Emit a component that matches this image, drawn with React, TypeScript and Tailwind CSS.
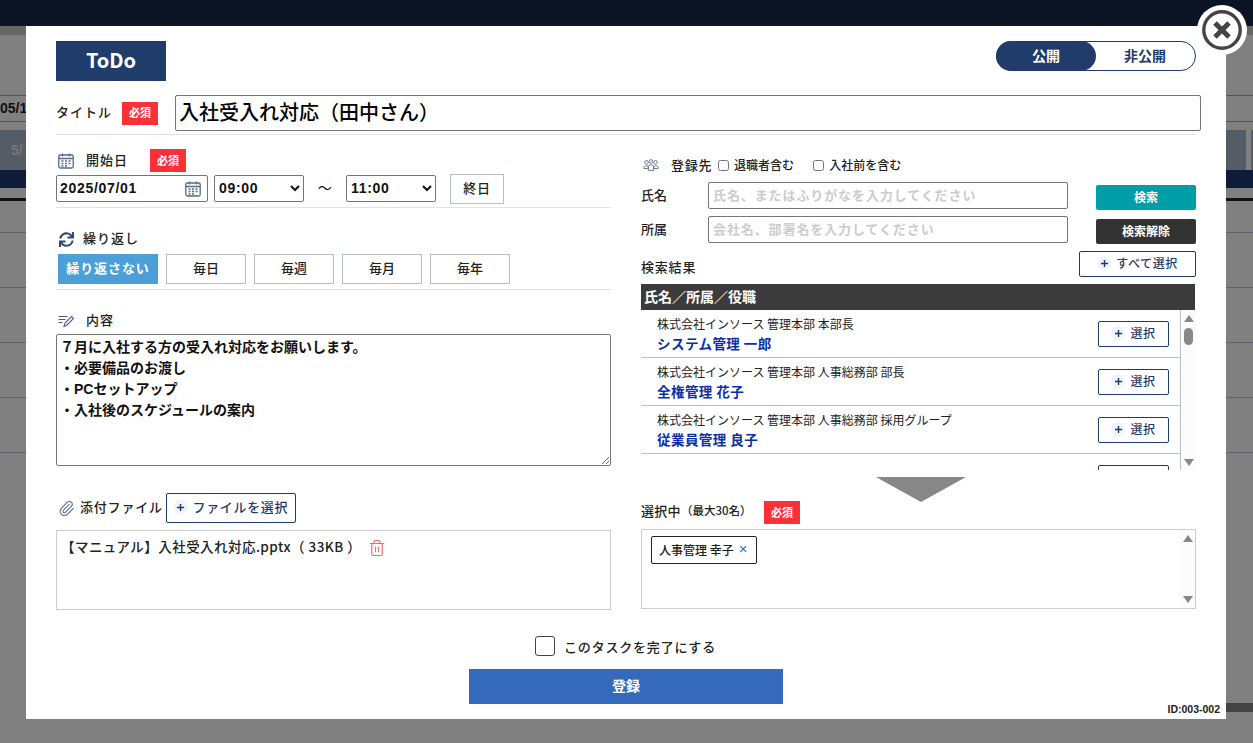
import { Paperclip, Trash2 } from "lucide-react"
import { FaSync } from "react-icons/fa"

const JP = "font-['Noto_Sans_CJK_JP',sans-serif]"
const ARIAL = "font-['Liberation_Sans','Noto_Sans_CJK_JP',sans-serif]"

const RESULTS = [
  { org: "株式会社インソース 管理本部 本部長", name: "システム管理 一郎" },
  { org: "株式会社インソース 管理本部 人事総務部 部長", name: "全権管理 花子" },
  { org: "株式会社インソース 管理本部 人事総務部 採用グループ", name: "従業員管理 良子" },
]

function Required() {
  return (
    <span className={`flex h-[23px] w-[36px] items-center justify-center bg-[#fb3137] pb-px text-[11px] font-bold text-white ${JP}`}>
      必須
    </span>
  )
}

function CalendarIcon({ className }: { className: string }) {
  return (
    <svg viewBox="0 0 16 16" className={className} fill="none" stroke="#566a8c">
      <rect x="0.8" y="2" width="14.4" height="13" rx="1.5" strokeWidth="1.3" />
      <path d="M1 5.5h14M4.5 0.5v3M11.5 0.5v3" strokeWidth="1.3" />
      <path d="M3.5 8h2M7 8h2M10.5 8h2M3.5 10.5h2M7 10.5h2M10.5 10.5h2M3.5 13h2M7 13h2" strokeWidth="1.4" />
    </svg>
  )
}

function PlusDot() {
  return (
    <span className="flex h-[14px] w-[14px] items-center justify-center rounded-full bg-[#f1f3f8]">
      <svg viewBox="0 0 10 10" className="h-[9px] w-[9px]" stroke="#1f3c6b" strokeWidth="1.6">
        <path d="M5 1v8M1 5h8" />
      </svg>
    </span>
  )
}

function OutlineButton({ label, className }: { label?: string; className: string }) {
  return (
    <button className={`flex items-center justify-center gap-[5px] rounded-[2px] border border-[#1f3c6b] bg-white pb-[2px] font-medium tracking-[0.05em] text-[#1f3c6b] ${className}`}>
      <PlusDot />
      {label}
    </button>
  )
}

function Backdrop() {
  return (
    <div className={`flex h-[743px] flex-col overflow-hidden bg-[#808080] ${ARIAL}`}>
      <div className="h-[26px] shrink-0 bg-[#0a1424]" />
      <div className="h-[9px] shrink-0 bg-[#676767]" />
      <div className="mt-[60px] flex h-[27px] shrink-0 items-center border-y border-[#555] text-[14px] font-bold text-[#111]">05/1</div>
      <div className="mt-[8px] flex h-[40px] shrink-0 justify-between">
        <div className="flex w-[26px] items-center bg-[#545c66] pl-[11px] text-[14px] font-bold text-[#777]">5/</div>
        <div className="flex gap-[5px]">
          <div className="w-[20px] bg-[#545c66]" />
          <div className="w-[2px] bg-[#545c66]" />
        </div>
      </div>
      <div className="h-[18px] shrink-0 bg-[#0f1c38]" />
      <div className="mt-[10px] h-[3px] shrink-0 bg-[#111]" />
      {[0, 1, 2, 3, 4].map((i) => (
        <div key={i} className={`h-px shrink-0 bg-[#5c6068] ${i === 0 ? "mt-[31px]" : "mt-[54px]"}`} />
      ))}
      <div className="mt-[250px] flex h-[9px] shrink-0 justify-end">
        <div className="w-[27px] bg-[#444]" />
      </div>
    </div>
  )
}

function LeftColumn() {
  return (
    <div className="flex w-[555px] flex-col">
      <div className="mt-[14px] flex h-[23px] items-center">
        <CalendarIcon className="h-[16px] w-[16px] translate-x-[2px]" />
        <span className="ml-[14px] w-[64px] pb-[2px] text-[13px] font-medium tracking-[1px] text-[#222]">開始日</span>
        <Required />
      </div>
      <div className={`mt-[2px] flex h-[30px] items-start text-[14px] font-bold tracking-[0.7px] text-[#111] ${ARIAL}`}>
        <div className="relative mt-px h-[27px] w-[152px]">
          <input
            defaultValue="2025/07/01"
            className="h-full w-full rounded-[2px] border border-[#767676] bg-white pb-[2px] pl-[3px] outline-none"
          />
          <CalendarIcon className="absolute right-[7px] top-[6px] h-[16px] w-[16px]" />
        </div>
        <select defaultValue="09:00" className="ml-[6px] mt-px h-[27px] w-[90px] rounded-[2px] border border-[#767676] bg-white pb-[2px]">
          <option>09:00</option>
        </select>
        <span className={`mt-[3px] flex w-[42px] justify-center text-[14px] font-normal ${JP}`}>～</span>
        <select defaultValue="11:00" className="mt-px h-[27px] w-[90px] rounded-[2px] border border-[#767676] bg-white pb-[2px]">
          <option>11:00</option>
        </select>
        <button className={`ml-[14px] h-[30px] w-[54px] border border-[#b5bfcc] bg-white pb-[2px] text-[13px] font-medium text-[#222] ${JP}`}>終日</button>
      </div>
      <div className="mt-[3px] border-b border-[#dfe2e8]" />

      <div className="mt-[21px] flex h-[20px] items-center">
        <FaSync className="ml-[3px] h-[15px] w-[15px] text-[#2f4a75]" />
        <span className="ml-[9px] pb-[2px] text-[13px] font-medium tracking-[1px] text-[#222]">繰り返し</span>
      </div>
      <div className="mt-[5px] flex gap-[8px] pl-[2px] text-[13px] font-medium">
        <button className="h-[30px] w-[100px] bg-[#4c9fd7] pb-[2px] font-bold tracking-[0.9px] text-white">繰り返さない</button>
        {["毎日", "毎週", "毎月", "毎年"].map((d) => (
          <button key={d} className="h-[30px] w-[80px] border border-[#b5bfcc] bg-white pb-[2px] text-[#222]">
            {d}
          </button>
        ))}
      </div>
      <div className="mt-[5px] border-b border-[#dfe2e8]" />

      <div className="mt-[21px] flex h-[20px] items-center">
        <svg viewBox="0 0 16 14" className="ml-[2px] h-[14px] w-[16px]" fill="none" stroke="#4a6288" strokeWidth="1.1">
          <path d="M0.5 2.5h9M0.5 5.5h7M0.5 8.5h4" />
          <path d="M6 12.5l1-3.5 6.5-6.5 2 2-6.5 6.5z" />
        </svg>
        <span className="ml-[12px] pb-[2px] text-[13px] font-medium tracking-[1px] text-[#222]">内容</span>
      </div>
      <textarea
        defaultValue={"７月に入社する方の受入れ対応をお願いします。\n・必要備品のお渡し\n・PCセットアップ\n・入社後のスケジュールの案内"}
        className={`mt-[3px] h-[132px] w-full rounded-[2px] border border-[#767676] bg-white px-[3px] py-[2px] text-[14px] font-bold leading-[21px] text-[#111] outline-none ${ARIAL}`}
      />

      <div className="mt-[27px] flex h-[30px] items-center">
        <Paperclip className="ml-[2px] h-[17px] w-[17px] text-[#566a8c]" strokeWidth={1.5} />
        <span className="ml-[5px] pb-[3px] text-[13px] font-medium tracking-[0.8px] text-[#222]">添付ファイル</span>
        <OutlineButton label="ファイルを選択" className="ml-[3px] h-[30px] w-[130px] text-[13px]" />
      </div>
      <div className="mt-[7px] flex h-[80px] items-start border border-[#ccc] bg-white pl-[4px] pt-[5px] text-[13.5px] font-medium text-[#222]">
        <span className="tracking-[0.45px]">【マニュアル】入社受入れ対応.pptx（ 33KB ）</span>
        <Trash2 className="ml-[7px] mt-[3px] h-[18px] w-[18px] text-[#ee6a5f]" strokeWidth={1.5} />
      </div>
    </div>
  )
}

function RightColumn() {
  return (
    <div className="flex w-[555px] flex-col">
      <div className="mt-[20px] flex h-[20px] items-center text-[13px] font-medium text-[#222]">
        <svg viewBox="0 0 18 14" className="ml-[2px] h-[14px] w-[16px]" fill="none" stroke="#566a8c" strokeWidth="1">
          <circle cx="4" cy="4" r="2" />
          <circle cx="9" cy="3" r="2" />
          <circle cx="14" cy="4" r="2" />
          <path d="M1 10c0-3 5-3 5 0v1H1zM6 9c0-3 6-3 6 0v4H6zM12 10c0-3 5-3 5 0v1h-5z" />
        </svg>
        <span className="ml-[12px] tracking-[0.7px]">登録先</span>
        <input type="checkbox" className="ml-[6px] h-[11px] w-[11px]" />
        <span className="ml-[5px] text-[12px]">退職者含む</span>
        <input type="checkbox" className="ml-[19px] h-[11px] w-[11px]" />
        <span className="ml-[5px] text-[12px]">入社前を含む</span>
      </div>
      {[
        { label: "氏名", holder: "氏名、またはふりがなを入力してください", text: "検索", color: "bg-[#009ea7]" },
        { label: "所属", holder: "会社名、部署名を入力してください", text: "検索解除", color: "bg-[#333333]" },
      ].map((r) => (
        <div key={r.label} className="mt-[7px] flex h-[27px] items-start">
          <span className="w-[67px] text-[13px] font-medium leading-[25px] text-[#222]">{r.label}</span>
          <input
            placeholder={r.holder}
            className="h-[27px] w-[360px] rounded-[2px] border border-[#767676] bg-white pb-[2px] pl-[4px] text-[13px] font-bold tracking-[0.9px] outline-none placeholder:text-[#ccc]"
          />
          <button className={`ml-[28px] mt-[3px] h-[25px] w-[100px] rounded-[2px] pb-[2px] text-[12px] font-bold text-white ${r.color}`}>{r.text}</button>
        </div>
      ))}
      <div className="mt-[8px] flex h-[26px] items-end justify-between">
        <span className="pb-px text-[13px] font-medium leading-[19px] tracking-[0.8px] text-[#222]">検索結果</span>
        <OutlineButton label="すべて選択" className="h-[26px] w-[117px] text-[12px]" />
      </div>
      <div className="mt-[7px] flex h-[26px] w-[554px] items-center bg-[#3b3b3b] pb-[2px] pl-[3px] text-[14px] font-bold text-white">氏名／所属／役職</div>
      <div className="flex h-[160px] overflow-hidden">
        <div className="w-[540px] border-r border-[#b8c0cc]">
          {RESULTS.map((r) => (
            <div key={r.name} className="flex h-[48px] items-start justify-between border-b border-[#b8c0cc] pl-[16px] pr-[11px]">
              <div>
                <div className="mt-[6px] text-[12px] leading-[16px] text-[#222]">{r.org}</div>
                <div className="mt-[2px] text-[13.5px] font-bold leading-[18px] tracking-[0.45px] text-[#0b2fa8]">{r.name}</div>
              </div>
              <OutlineButton label="選択" className="mt-[11px] h-[26px] w-[71px] text-[12px]" />
            </div>
          ))}
          <div className="flex justify-end pr-[11px] pt-[11px]">
            <OutlineButton className="h-[26px] w-[71px]" />
          </div>
        </div>
        <div className="flex w-[15px] flex-col items-center bg-[#fbfbfb] pt-[5px]">
          <span className="h-0 w-0 border-x-[5px] border-b-[7px] border-x-transparent border-b-[#888]" />
          <span className="mt-[6px] h-[17px] w-[9px] rounded-full bg-[#888]" />
          <span className="mb-[4px] mt-auto h-0 w-0 border-x-[5px] border-t-[7px] border-x-transparent border-t-[#888]" />
        </div>
      </div>
      <svg viewBox="0 0 90 25" className="ml-[235px] mt-[7px] h-[25px] w-[90px] shrink-0">
        <polygon points="0,0 90,0 45,25" fill="#878787" />
      </svg>
      <div className="-mt-px flex h-[23px] items-center">
        <span className="pb-[3px] text-[13px] font-medium tracking-[0.3px] text-[#222]">選択中</span>
        <span className="w-[83px] pb-[3px] text-[11.5px] font-medium text-[#222]">（最大30名）</span>
        <Required />
      </div>
      <div className="mt-[5px] flex h-[80px] justify-between border border-[#ccc] bg-white">
        <div className="ml-[9px] mt-[6px] flex h-[28px] w-[106px] items-center gap-[5px] rounded-[2px] border border-[#222] pb-px pl-[7px] text-[12px] font-medium text-[#222]">
          人事管理 幸子
          <span className={`text-[15px] font-normal text-[#3a6fb0] ${ARIAL}`}>×</span>
        </div>
        <div className="flex w-[15px] flex-col items-center bg-[#fbfbfb] py-[5px]">
          <span className="h-0 w-0 border-x-[5px] border-b-[7px] border-x-transparent border-b-[#888]" />
          <span className="mt-auto h-0 w-0 border-x-[5px] border-t-[7px] border-x-transparent border-t-[#888]" />
        </div>
      </div>
    </div>
  )
}

export default function App() {
  return (
    <div className={`relative h-[743px] w-full overflow-hidden ${JP}`}>
      <Backdrop />
      <div className="absolute left-[26px] top-[26px] flex h-[693px] w-[1200px] flex-col bg-white">
        <div className="px-[30px] pt-[15px]">
          <div className="flex items-start justify-between">
            <div className="flex h-[40px] w-[110px] items-center justify-center bg-[#1f3c6b] pb-[2px] text-[20px] font-bold text-white">ToDo</div>
            <div className="flex h-[30px] w-[200px] rounded-full border border-[#1f3c6b] text-[14px] font-bold">
              <div className="-m-px flex h-[30px] w-[100px] items-center justify-center rounded-full bg-[#1f3c6b] pb-[2px] text-white">公開</div>
              <div className="flex flex-1 items-center justify-center pb-[2px] text-[#1f3c6b]">非公開</div>
            </div>
          </div>
          <div className="-mr-[5px] mt-[14px] flex h-[36px] items-center">
            <span className="w-[66px] pb-[2px] text-[13px] font-medium tracking-[1px] text-[#222]">タイトル</span>
            <Required />
            <input
              defaultValue="入社受入れ対応（田中さん）"
              className="ml-[17px] h-[36px] flex-1 rounded-[2px] border border-[#767676] bg-white pb-[4px] pl-[3px] text-[20px] font-medium text-black outline-none"
            />
          </div>
          <div className="mt-[3px] border-b border-[#dfe2e8]" />
          <div className="flex justify-between">
            <LeftColumn />
            <RightColumn />
          </div>
          <div className="mt-[26px] flex h-[20px] items-center justify-center pr-px">
            <input type="checkbox" className="h-[20px] w-[20px] appearance-none rounded-[3px] border border-[#444] bg-white" />
            <span className="ml-[9px] pt-[2px] text-[13px] font-medium tracking-[0.8px] text-[#222]">このタスクを完了にする</span>
          </div>
          <button className="mx-auto mt-[13px] block h-[35px] w-[314px] bg-[#3569bb] pb-[3px] text-[14px] font-bold text-white">登録</button>
        </div>
        <div className={`pr-[6px] text-right text-[10.5px] font-bold leading-[10px] text-[#222] ${ARIAL}`}>ID:003-002</div>
      </div>
      <button className="absolute left-[1197px] top-[5px] flex h-[50px] w-[50px] items-center justify-center rounded-full bg-white">
        <svg viewBox="0 0 40 40" className="h-[40px] w-[40px]" fill="none" stroke="#444">
          <circle cx="20" cy="20" r="18.2" strokeWidth="3.4" />
          <path d="M13 13l14 14M27 13L13 27" strokeWidth="5" />
        </svg>
      </button>
    </div>
  )
}
